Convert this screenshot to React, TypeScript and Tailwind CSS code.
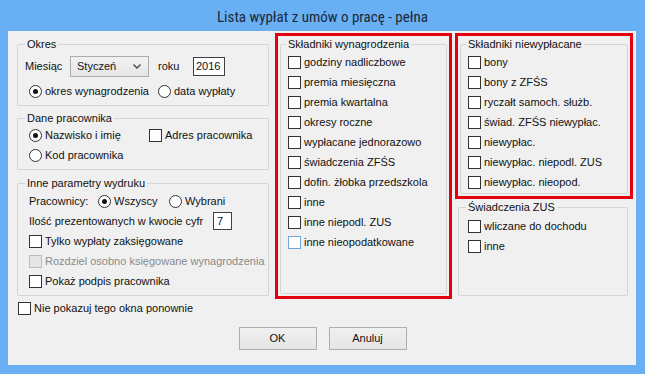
import React from "react";

const FONT = { fontFamily: '"Liberation Sans", Arial, sans-serif' };

function Box({ disabled, focus }: { disabled?: boolean; focus?: boolean }) {
  const cls = disabled
    ? "bg-[#e6e6e6] border-[#bcbcbc]"
    : focus
    ? "bg-white border-[#6ea7e0]"
    : "bg-white border-[#333333]";
  return <span className={`block w-[13px] h-[13px] border shrink-0 ${cls}`} />;
}

function CB({ label, disabled, focus, className = "" }: { label: string; disabled?: boolean; focus?: boolean; className?: string }) {
  return (
    <div className={`h-[20px] flex items-center ${className}`}>
      <Box disabled={disabled} focus={focus} />
      <span className={`ml-[3px] whitespace-nowrap ${disabled ? "text-[#8a8a8a]" : ""}`}>{label}</span>
    </div>
  );
}

function Radio({ label, checked, className = "" }: { label: string; checked?: boolean; className?: string }) {
  return (
    <div className={`h-[20px] flex items-center ${className}`}>
      <span className="w-[13px] h-[13px] rounded-full border border-[#333333] bg-white flex items-center justify-center shrink-0">
        {checked && <span className="block w-[5px] h-[5px] rounded-full bg-[#111]" />}
      </span>
      <span className="ml-[3px] whitespace-nowrap">{label}</span>
    </div>
  );
}

function Legend({ children, ml = "ml-[7px]" }: { children: React.ReactNode; ml?: string }) {
  return <legend className={`${ml} px-[2px] h-[14px] leading-[14px]`}>{children}</legend>;
}

export default function App() {
  return (
    <div className="w-[645px] h-[374px] bg-[#68aff4] flex flex-col text-[11px] text-[#111]" style={FONT}>
      <div className="h-[31px] flex items-center justify-center">
        <span
          className="text-[15px] text-[#1b2836] leading-none pt-[3px]"
          style={{ fontFamily: '"Liberation Sans Narrow", "Roboto Condensed", Roboto, sans-serif' }}
        >
          Lista wypłat z umów o pracę - pełna
        </span>
      </div>
      <div className="mx-[8px] w-[628px] h-[334px] bg-[#f0f0f0] pt-[2px] flex flex-col">
        <div className="flex items-start">
          {/* Left column */}
          <div className="ml-[9px] w-[252px] mt-[4px] flex flex-col">
            <fieldset className="border border-[#d5d5d5] rounded-[2px] pb-[4px]">
              <Legend>Okres</Legend>
              <div className="mt-[5px] h-[21px] flex items-center pl-[7px]">
                <span className="w-[45px]">Miesiąc</span>
                <div className="w-[79px] h-[21px] border border-[#acacac] bg-gradient-to-b from-[#f2f2f2] to-[#e5e5e5] flex items-center pl-[6px] pr-[7px]">
                  <span className="flex-1">Styczeń</span>
                  <svg width="8" height="5" viewBox="0 0 8 5">
                    <path d="M0.5 0.5 L4 4 L7.5 0.5" fill="none" stroke="#444" strokeWidth="1.3" />
                  </svg>
                </div>
                <span className="ml-[9px] w-[35px]">roku</span>
                <div className="w-[32px] h-[19px] border border-[#404040] bg-white flex items-center pl-[2px]">2016</div>
              </div>
              <div className="mt-[4px] flex pl-[11px]">
                <Radio label="okres wynagrodzenia" checked className="w-[129px]" />
                <Radio label="data wypłaty" />
              </div>
            </fieldset>

            <fieldset className="mt-[5px] border border-[#d5d5d5] rounded-[2px] pb-[4px]">
              <Legend>Dane pracownika</Legend>
              <div className="flex pl-[11px]">
                <Radio label="Nazwisko i imię" checked className="w-[120px]" />
                <CB label="Adres pracownika" />
              </div>
              <div className="pl-[11px]">
                <Radio label="Kod pracownika" />
              </div>
            </fieldset>

            <fieldset className="mt-[6px] border border-[#d5d5d5] rounded-[2px] pb-[4px]">
              <Legend>Inne parametry wydruku</Legend>
              <div className="mt-[1px] flex items-center pl-[11px] h-[20px]">
                <span className="w-[69px]">Pracownicy:</span>
                <Radio label="Wszyscy" checked className="w-[71px]" />
                <Radio label="Wybrani" />
              </div>
              <div className="flex items-center pl-[11px] h-[20px]">
                <span className="w-[184px] whitespace-nowrap">Ilość prezentowanych w kwocie cyfr</span>
                <div className="w-[19px] h-[18px] border border-[#404040] bg-white flex items-center pl-[3px]">7</div>
              </div>
              <div className="pl-[11px]">
                <CB label="Tylko wypłaty zaksięgowane" />
                <CB label="Rozdziel osobno księgowane wynagrodzenia" disabled />
                <CB label="Pokaż podpis pracownika" />
              </div>
            </fieldset>

            <CB label="Nie pokazuj tego okna ponownie" className="mt-[2px] ml-[1px]" />
          </div>

          {/* Middle column */}
          <div className="ml-[6px] w-[177px] h-[266px] border-[3px] border-[#e3000f] flex flex-col">
            <fieldset className="flex-1 mt-[1px] mx-[2px] mb-[2px] border border-[#d5d5d5] rounded-[2px]">
              <Legend ml="ml-[5px]">Składniki wynagrodzenia</Legend>
              <div className="mt-[1px] pl-[7px]">
                <CB label="godziny nadliczbowe" />
                <CB label="premia miesięczna" />
                <CB label="premia kwartalna" />
                <CB label="okresy roczne" />
                <CB label="wypłacane jednorazowo" />
                <CB label="świadczenia ZFŚS" />
                <CB label="dofin. żłobka przedszkola" />
                <CB label="inne" />
                <CB label="inne niepodl. ZUS" />
                <CB label="inne nieopodatkowane" focus />
              </div>
            </fieldset>
          </div>

          {/* Right column */}
          <div className="ml-[3px] w-[178px] flex flex-col">
            <div className="h-[166px] border-[3px] border-[#e3000f] flex flex-col">
              <fieldset className="flex-1 mt-[1px] mx-[2px] mb-[2px] border border-[#d5d5d5] rounded-[2px]">
                <Legend ml="ml-[5px]">Składniki niewypłacane</Legend>
                <div className="mt-[1px] pl-[7px]">
                  <CB label="bony" />
                  <CB label="bony z ZFŚS" />
                  <CB label="ryczałt samoch. służb." />
                  <CB label="świad. ZFŚS niewypłac." />
                  <CB label="niewypłac." />
                  <CB label="niewypłac. niepodl. ZUS" />
                  <CB label="niewypłac. nieopod." />
                </div>
              </fieldset>
            </div>
            <fieldset className="mt-[1px] ml-[3px] w-[170px] h-[96px] border border-[#d5d5d5] rounded-[2px]">
              <Legend>Świadczenia ZUS</Legend>
              <div className="mt-[2px] pl-[9px]">
                <CB label="wliczane do dochodu" />
                <CB label="inne" />
              </div>
            </fieldset>
          </div>
        </div>

        <div className="mt-[9px] flex justify-center gap-[12px] pl-[1px]">
          <button className="w-[78px] h-[23px] border border-[#adadad] bg-gradient-to-b from-[#f0f0f0] to-[#e5e5e5]">OK</button>
          <button className="w-[78px] h-[23px] border border-[#adadad] bg-gradient-to-b from-[#f0f0f0] to-[#e5e5e5]">Anuluj</button>
        </div>
      </div>
    </div>
  );
}
